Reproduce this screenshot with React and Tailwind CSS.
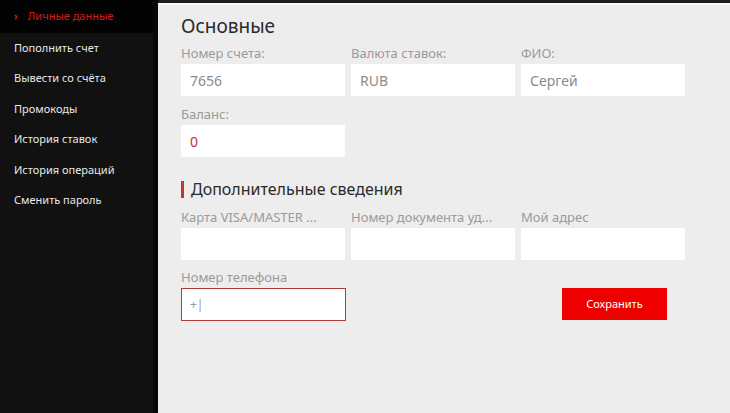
import React from "react";

const font = { fontFamily: '"Noto Sans", "Open Sans", sans-serif' };

function Field({ label, value, valueClass = "text-[#8a8a8a]", className = "" }) {
  return (
    <div className={"flex flex-col w-[164px] " + className}>
      <div className="h-[21px] text-[13px] leading-[21px] text-[#9a9a9a] whitespace-nowrap overflow-hidden">{label}</div>
      <div className={"h-[32px] bg-white flex items-center px-[9px] text-[14px] " + valueClass}>{value}</div>
    </div>
  );
}

export default function App() {
  const items = ["Пополнить счет", "Вывести со счёта", "Промокоды", "История ставок", "История операций", "Сменить пароль"];
  return (
    <div className="w-[730px] h-[413px] flex overflow-hidden" style={font}>
      <aside className="w-[158px] h-full bg-[#111111] flex border-r-[5px] border-[#080808]">
        <div className="flex-1 flex flex-col">
          <div className="h-[33px] bg-[#030303] flex items-center pl-[14px] text-[11px] text-[#d41a1a] gap-[10px]">
            <span className="text-[10px] font-bold">›</span>
            <span>Личные данные</span>
          </div>
          <div className="flex flex-col">
            {items.map((t) => (
              <div key={t} className="h-[30.4px] flex items-center pl-[14px] text-[11px] text-[#e8e8e8]">{t}</div>
            ))}
          </div>
        </div>
      </aside>
      <main className="flex-1 h-full bg-[#ededed] border-t-[3px] border-[#1c1c1c] relative">
        <div className="h-[2px] bg-[#f8f8f8]" />
        <div className="pl-[23px] pt-[8px]">
          <h1 className="text-[19px] leading-[26px] text-[#2a2a2a]">Основные</h1>
          <div className="flex gap-[6px] mt-[4px]">
            <Field label="Номер счета:" value="7656" />
            <Field label="Валюта ставок:" value="RUB" />
            <Field label="ФИО:" value="Сергей" />
          </div>
          <div className="flex gap-[6px] mt-[8px]">
            <Field label="Баланс:" value="0" valueClass="text-[#c0392b]" />
          </div>
          <div className="flex items-center mt-[22px] h-[20px]">
            <div className="w-[3px] h-[17px] bg-[#c0392b]" />
            <h2 className="ml-[7px] text-[16px] text-[#2a2a2a]">Дополнительные сведения</h2>
          </div>
          <div className="flex gap-[6px] mt-[8px]">
            <Field label="Карта VISA/MASTER ..." value="" />
            <Field label="Номер документа уд..." value="" />
            <Field label="Мой адрес" value="" />
          </div>
          <div className="flex items-end mt-[7px]">
            <div className="flex flex-col w-[165px]">
              <div className="h-[21px] text-[13px] leading-[21px] text-[#9a9a9a]">Номер телефона</div>
              <div className="h-[33px] bg-white border border-[#b03a3a] flex items-center px-[8px] text-[12px] text-[#999]">+|</div>
            </div>
            <button className="ml-[216px] w-[105px] h-[32px] bg-[#ee0000] text-white text-[11px] mb-[1px]">Сохранить</button>
          </div>
        </div>
      </main>
    </div>
  );
}
